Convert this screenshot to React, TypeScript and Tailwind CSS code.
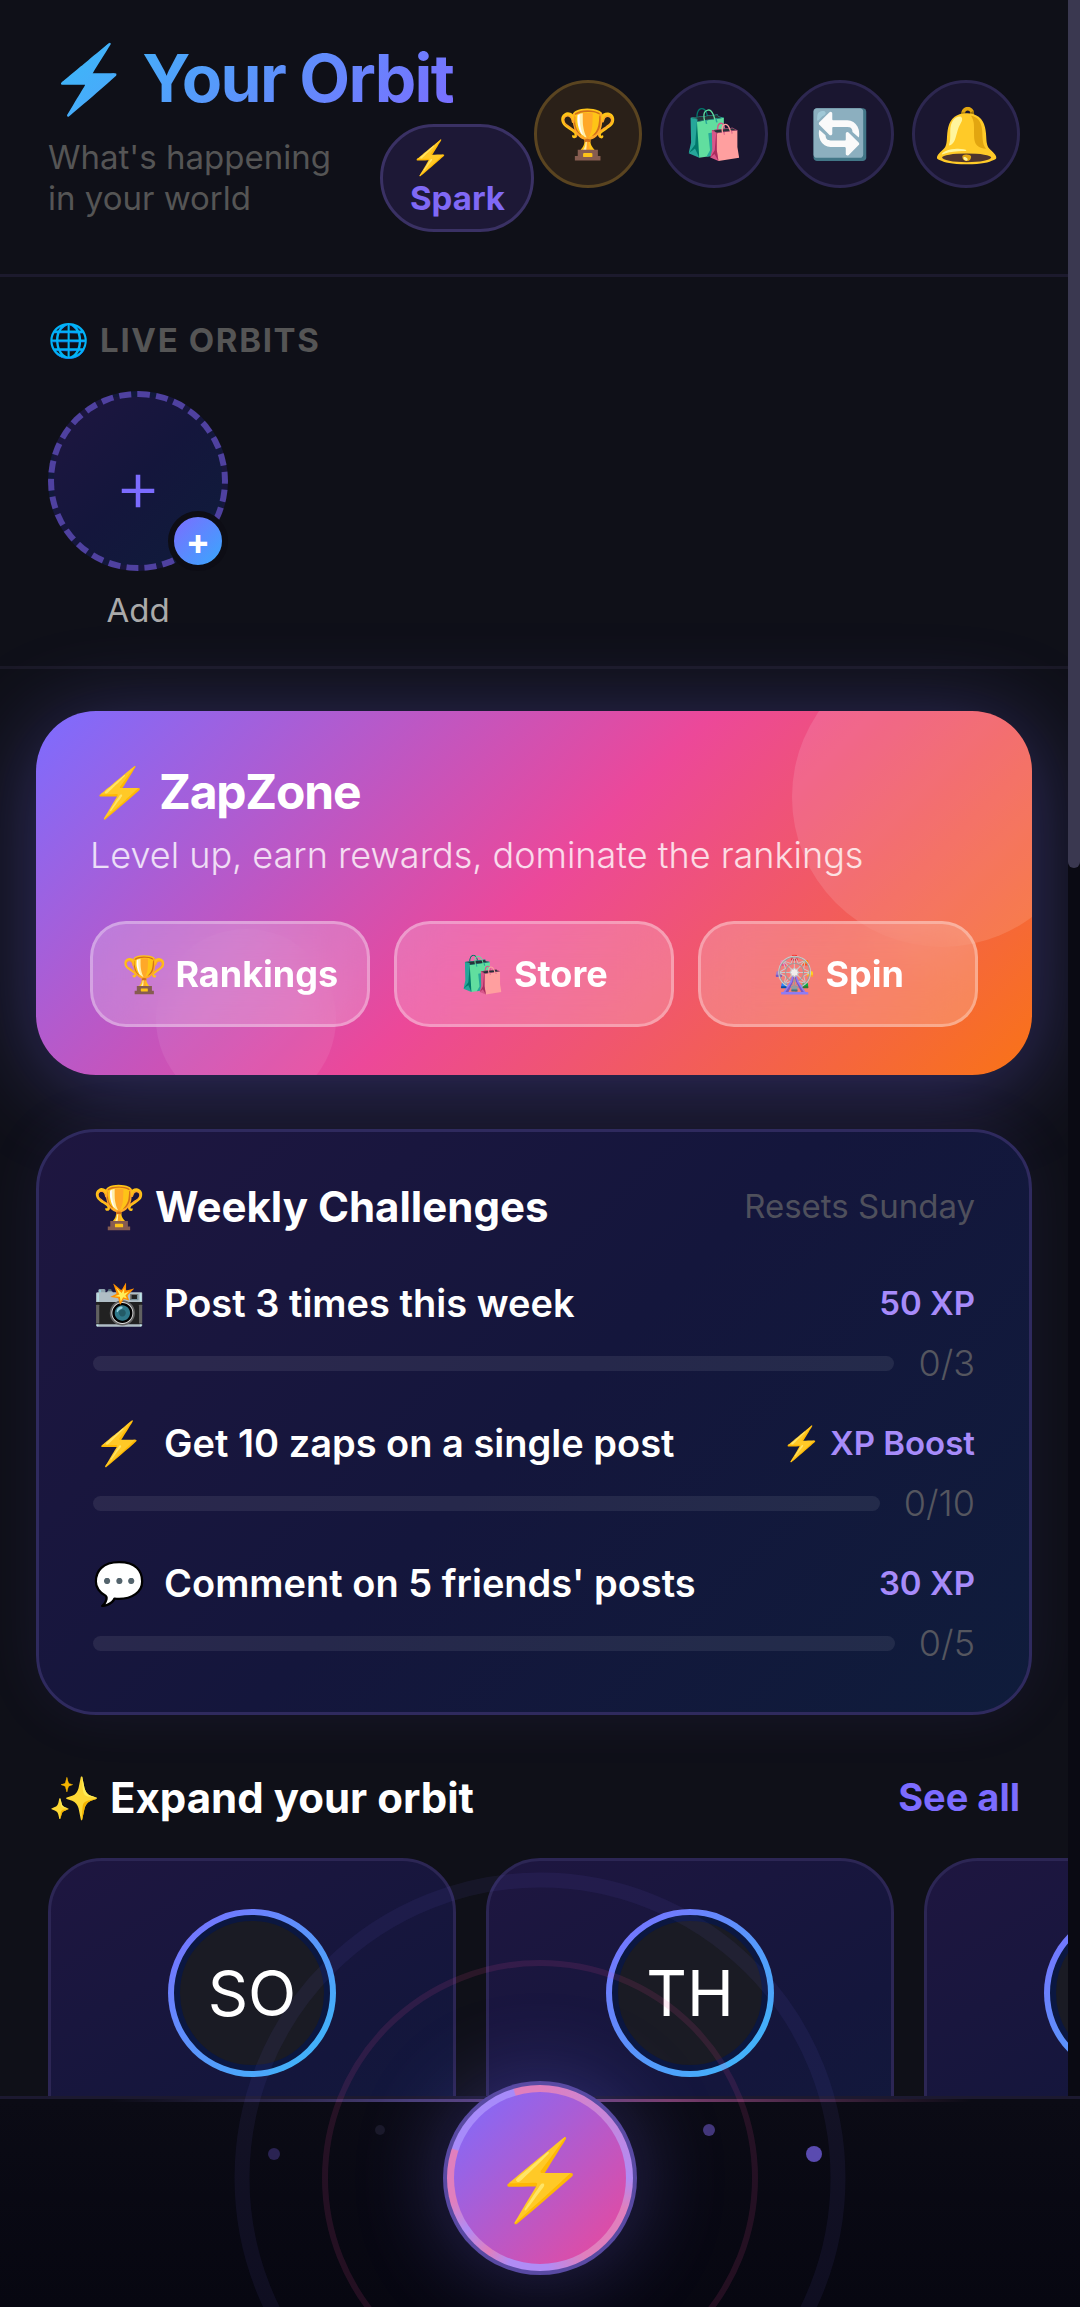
import { useState } from "react";

const QUICK_ACTIONS = [
  { emoji: "🏆", label: "Rankings", gold: true, large: false },
  { emoji: "🛍️", label: "Store", gold: false, large: false },
  { emoji: "🔄", label: "Refresh", gold: false, large: false },
  { emoji: "🔔", label: "Notifications", gold: false, large: true },
];

const ZAP_LINKS = [
  { emoji: "🏆", label: "Rankings" },
  { emoji: "🛍️", label: "Store" },
  { emoji: "🎡", label: "Spin" },
];

const CHALLENGES = [
  { emoji: "📸", title: "Post 3 times this week", reward: "50 XP", done: 0, goal: 3 },
  { emoji: "⚡", title: "Get 10 zaps on a single post", reward: "⚡ XP Boost", done: 0, goal: 10 },
  { emoji: "💬", title: "Comment on 5 friends' posts", reward: "30 XP", done: 0, goal: 5 },
];

const SUGGESTIONS = [
  { id: 1, initials: "SO" },
  { id: 2, initials: "TH" },
  { id: 3, initials: "" },
];

function Header() {
  return (
    <header className="flex shrink-0 items-center border-b-3 border-[#1c1a2d] px-12 pt-9 pb-[42px]">
      <div className="min-w-0 flex-1">
        <h1 className="w-fit bg-linear-135/srgb from-[#38bdf8] to-[#7c6cff] bg-clip-text text-[66px] leading-[84px] font-bold tracking-tight whitespace-nowrap text-transparent">
          ⚡ Your Orbit
        </h1>
        <div className="mt-1 flex items-center justify-between">
          <p className="max-w-[300px] text-[33px] leading-[41px] text-[#555]">
            What's happening in your world
          </p>
          <button
            type="button"
            className="w-[154px] rounded-full border-3 border-[#3a3164] bg-[#1d1836] px-[27px] py-2.5 text-left text-[33px] leading-[41px] font-bold text-[#8069f5]"
          >
            <span className="block">⚡</span>
            Spark
          </button>
        </div>
      </div>
      <div className="flex shrink-0 gap-[18px]">
        {QUICK_ACTIONS.map((a) => (
          <button
            key={a.label}
            type="button"
            aria-label={a.label}
            className={`flex size-[108px] items-center justify-center rounded-full border-3 ${
              a.gold ? "border-[#5a4420] bg-[#2a2018]" : "border-[#2d2750] bg-[#1a1630]"
            } ${a.large ? "text-[54px]" : "text-[48px]"}`}
          >
            {a.emoji}
          </button>
        ))}
      </div>
    </header>
  );
}

function LiveOrbits() {
  return (
    <section className="shrink-0 border-b-3 border-[#1a1926] px-12 pt-[42px] pb-[35px]">
      <h2 className="text-[33px] leading-[42px] font-bold tracking-wider text-[#555]">🌐 LIVE ORBITS</h2>
      <div className="mt-[30px] flex w-[180px] flex-col items-center gap-[18px]">
        <button
          type="button"
          aria-label="Add orbit"
          className="relative flex size-[180px] items-center justify-center rounded-full border-6 border-dashed border-[#4f41a0] bg-linear-135/srgb from-[#1e1640] via-[#14163c] to-[#0f1c3b] pt-2 text-[72px] font-light text-[#7c6cff]"
        >
          +
          <span className="absolute -right-1.5 -bottom-1.5 flex size-[60px] items-center justify-center rounded-full border-6 border-[#0d0d15] bg-linear-135/srgb from-[#7c6cff] to-[#38a8fd] text-[36px] font-bold text-white">
            +
          </span>
        </button>
        <span className="text-[33px] leading-[42px] text-[#aaa]">Add</span>
      </div>
    </section>
  );
}

function ZapZone() {
  return (
    <section className="relative shrink-0 overflow-hidden rounded-[60px] bg-linear-135/srgb from-[#7c6cff] via-[#ec4899] to-[#f97316] px-[54px] py-12">
      <div className="absolute -top-16 -right-[60px] size-[300px] rounded-full bg-white/12" />
      <div className="absolute -bottom-[34px] left-[120px] size-[180px] rounded-full bg-white/7" />
      <h2 className="text-[48px] leading-[66px] font-bold tracking-tight text-white">⚡ ZapZone</h2>
      <p className="text-[36px] leading-[60px] font-light text-white/80">
        Level up, earn rewards, dominate the rankings
      </p>
      <div className="relative mt-9 grid grid-cols-3 gap-6">
        {ZAP_LINKS.map((l) => (
          <button
            key={l.label}
            type="button"
            className="rounded-[36px] border-3 border-white/30 bg-white/20 py-[26px] text-[36px] leading-[48px] font-bold whitespace-nowrap text-white backdrop-blur-xl"
          >
            {l.emoji} {l.label}
          </button>
        ))}
      </div>
    </section>
  );
}

function WeeklyChallenges() {
  return (
    <section className="relative mt-[54px] shrink-0 rounded-[60px] border-3 border-[#2f2a5e] bg-linear-135/srgb from-[#1e1640] via-[#14163c] to-[#0f1c3b] px-[54px] pt-12 pb-4 shadow-[0_0_60px_rgba(124,108,255,0.08)]">
      <div className="flex items-center justify-between">
        <h2 className="text-[42px] leading-[54px] font-bold text-white">🏆 Weekly Challenges</h2>
        <span className="text-[33px] text-[#4f505c]">Resets Sunday</span>
      </div>
      <ul className="mt-[42px]">
        {CHALLENGES.map((c) => (
          <li key={c.title} className="h-[140px]">
            <div className="flex items-center leading-[54px]">
              <span className="w-[71px] shrink-0 text-[42px]">{c.emoji}</span>
              <span className="flex-1 text-[38px] font-semibold text-white">{c.title}</span>
              <span className="text-[33px] font-semibold text-[#a78bfa]">{c.reward}</span>
            </div>
            <div className="mt-3 flex items-center gap-6">
              <div className="h-[15px] flex-1 overflow-hidden rounded-full bg-white/8">
                <div
                  className="h-full rounded-full bg-[#7c6cff]"
                  style={{ width: `${(c.done / c.goal) * 100}%` }}
                />
              </div>
              <span className="text-[36px] leading-[42px] font-light text-[#55565f]">
                {c.done}/{c.goal}
              </span>
            </div>
          </li>
        ))}
      </ul>
    </section>
  );
}

function ExpandOrbit() {
  return (
    <section className="mt-[54px] shrink-0">
      <div className="flex items-center justify-between px-12">
        <h2 className="text-[42px] leading-[54px] font-bold text-white">✨ Expand your orbit</h2>
        <a href="#suggestions" className="text-[38px] font-bold text-[#7c6cff]">
          See all
        </a>
      </div>
      <div id="suggestions" className="mt-8 flex gap-[30px] overflow-x-auto px-12 [scrollbar-width:none]">
        {SUGGESTIONS.map((s) => (
          <article
            key={s.id}
            className="flex h-[480px] w-[408px] shrink-0 flex-col items-center rounded-[54px] border-3 border-[#2c2654] bg-linear-150/srgb from-[#1e1640] via-[#14163c] to-[#0f1c3b] pt-12"
          >
            <div className="size-[168px] rounded-full bg-linear-135/srgb from-[#7c6cff] to-[#38bdf8] p-1.5">
              <div className="flex size-full items-center justify-center rounded-full border-6 border-[#0b1740] bg-[#1a1b24] text-[63px] text-white">
                {s.initials}
              </div>
            </div>
          </article>
        ))}
      </div>
    </section>
  );
}

// Pulse rings and satellites that surround the create button
function OrbitRings() {
  return (
    <svg
      viewBox="-310 -310 620 620"
      className="pointer-events-none absolute top-1/2 left-1/2 size-[620px] -translate-1/2"
      fill="none"
    >
      <circle r="298" stroke="#7c6cff" strokeOpacity="0.07" strokeWidth="15" />
      <circle r="215" stroke="#ec4899" strokeOpacity="0.12" strokeWidth="6" />
      <circle cx="-266" cy="-24" r="6" fill="#2a2352" />
      <circle cx="-160" cy="-48" r="5" fill="#1a1929" />
      <circle cx="169" cy="-48" r="6" fill="#43377a" />
      <circle cx="274" cy="-24" r="8" fill="#5a4bb0" />
    </svg>
  );
}

function BottomNav({ onCreate }: { onCreate: () => void }) {
  return (
    <nav className="relative flex shrink-0 justify-center border-t-3 border-[#1c1930] bg-linear-to-b from-[#0b0b15] to-[#070711] pb-8">
      <div className="absolute inset-x-[10%] top-0 h-[3px] bg-[linear-gradient(90deg,transparent,#4a3f78_35%,#7a3f6e_65%,transparent)]" />
      <div className="relative -mt-[18px]">
        <OrbitRings />
        <button
          type="button"
          aria-label="Create zap"
          onClick={onCreate}
          className="relative flex size-[194px] rounded-full bg-[#594aa3] p-1 shadow-[0_0_90px_rgba(124,108,255,0.3)]"
        >
          <span className="flex size-full rounded-full bg-[conic-gradient(#e07fbd,#b08cf5_90deg,#e07fbd_110deg,#e07fbd_150deg,#b08cf5_175deg,#b08cf5_200deg,#e07fbd_215deg,#b08cf5_235deg,#e07fbd_255deg,#e07fbd_288deg,#a78bfa_289deg,#a78bfa_343deg,#e07fbd_344deg)] p-[7px]">
            <span className="flex size-full items-center justify-center rounded-full bg-linear-135/srgb from-[#7c6cff] to-[#ec4899] text-[78px]">
              ⚡
            </span>
          </span>
        </button>
      </div>
    </nav>
  );
}

export default function App() {
  const [, setCreating] = useState(false);

  return (
    <div className="flex h-screen flex-col overflow-hidden bg-[#0f1018] font-['Inter','Liberation_Sans',sans-serif]">
      <div className="flex min-h-0 flex-1">
        <main className="flex min-w-0 flex-1 flex-col overflow-y-auto [scrollbar-width:none]">
          <Header />
          <LiveOrbits />
          <div className="shrink-0 px-9 pt-[42px]">
            <div className="rounded-[60px] shadow-[0_12px_90px_rgba(124,108,255,0.35)]">
              <ZapZone />
            </div>
            <WeeklyChallenges />
          </div>
          <ExpandOrbit />
        </main>
        <div className="w-3 shrink-0 bg-[#0a0a13]">
          <div className="h-[868px] rounded-b-full bg-[#3a3850]" />
        </div>
      </div>
      <BottomNav onCreate={() => setCreating(true)} />
    </div>
  );
}
